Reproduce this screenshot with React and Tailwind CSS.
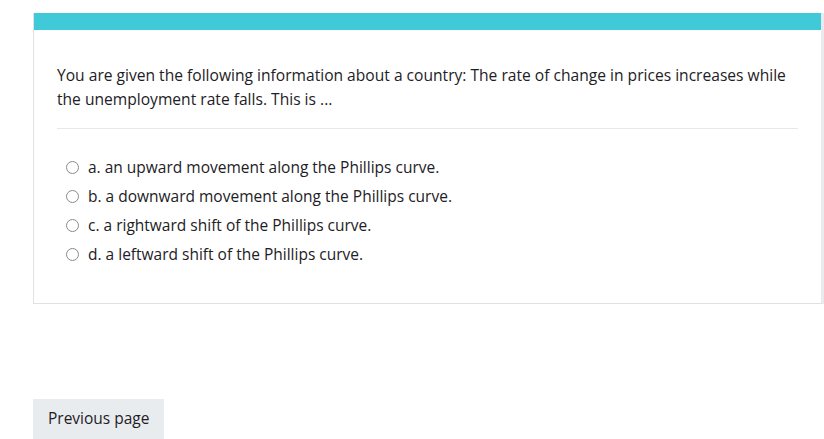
import React from "react";

const options = [
  "a. an upward movement along the Phillips curve.",
  "b. a downward movement along the Phillips curve.",
  "c. a rightward shift of the Phillips curve.",
  "d. a leftward shift of the Phillips curve.",
];

export default function App() {
  return (
    <div
      className="w-[824px] h-[439px] overflow-hidden bg-white text-[#1d2125]"
      style={{ fontFamily: '"Open Sans", "Noto Sans", sans-serif' }}
    >
      <div className="pt-[13px] pl-[33px]">
        <div className="w-[791px] border-l border-b border-[#dee2e6] border-r-[3px] border-r-[#e9ecef]">
          <div className="h-[17px] bg-[#40cad9]" />
          <div className="px-[23px] pt-[33px]">
            <div className="text-[15.6px] leading-[24px] pb-[17px] border-b border-[#e5e8ec]">
              You are given the following information about a country: The rate of change in prices increases while the unemployment rate falls. This is ...
            </div>
            <div className="pt-[24px] pb-[34px] flex flex-col">
              {options.map((o) => (
                <label key={o} className="flex items-center h-[29px] text-[15.5px]">
                  <span className="ml-[9px] w-[13px] h-[13px] rounded-full border border-[#8a8a8a] bg-white" />
                  <span className="ml-[9px]">{o}</span>
                </label>
              ))}
            </div>
          </div>
        </div>
      </div>
      <div className="pl-[33px] pt-[95px]">
        <button className="h-[40px] px-[15px] bg-[#e9ecef] text-[15.5px] text-[#1d2125]">
          Previous page
        </button>
      </div>
    </div>
  );
}
